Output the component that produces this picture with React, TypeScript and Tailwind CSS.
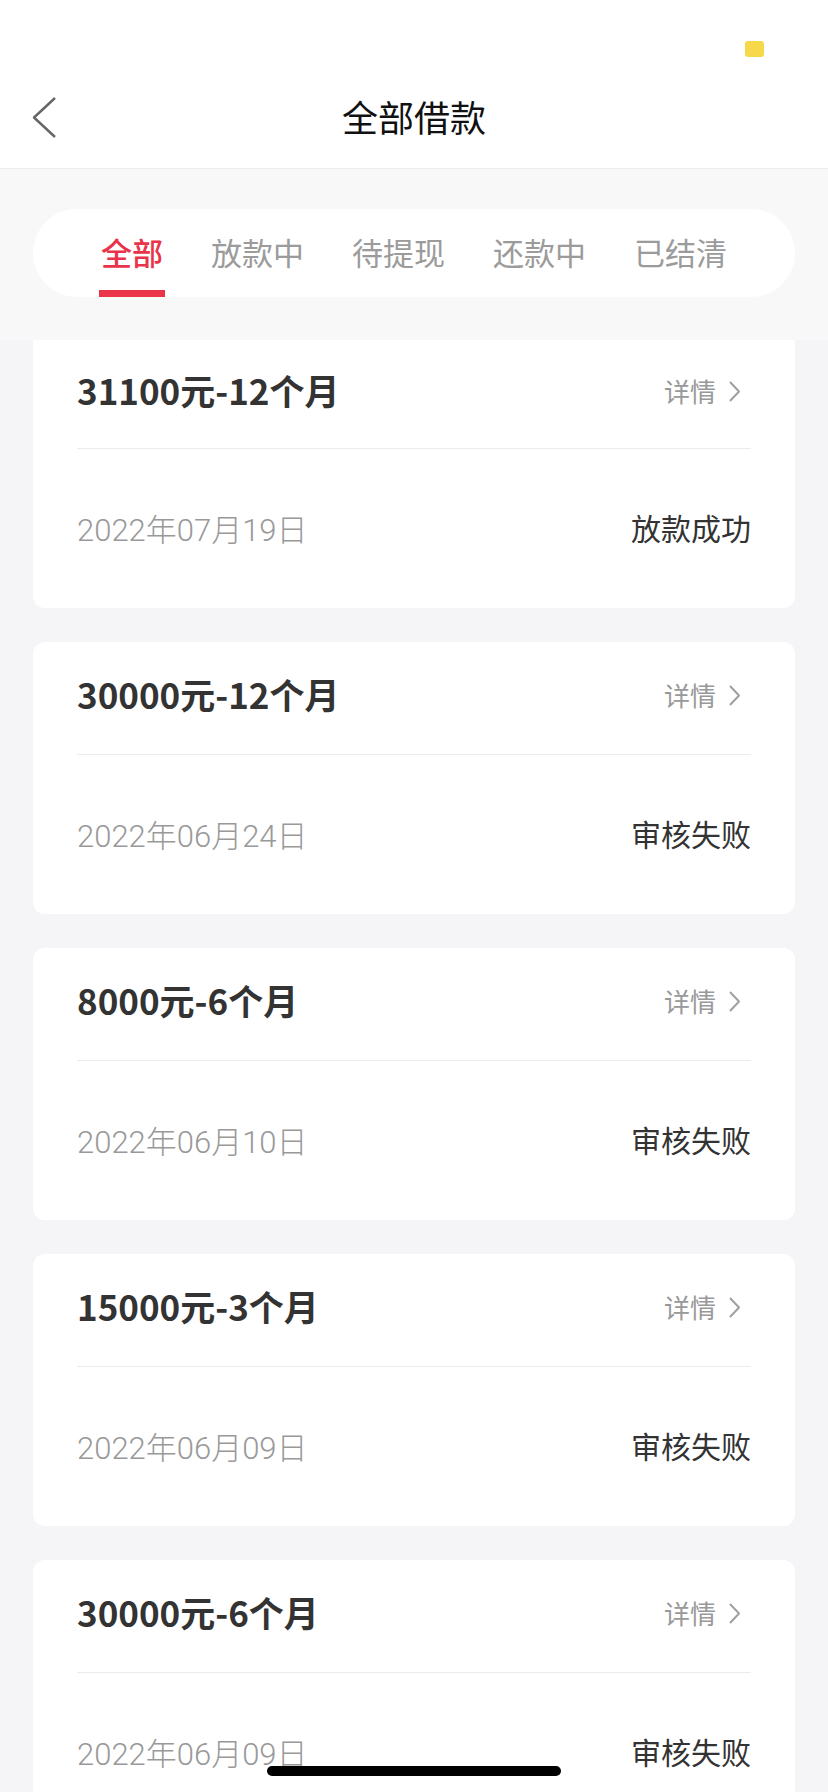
import React from "react";

type Loan = { title: string; date: string; status: string };

const loans: Loan[] = [
  { title: "31100元-12个月", date: "2022年07月19日", status: "放款成功" },
  { title: "30000元-12个月", date: "2022年06月24日", status: "审核失败" },
  { title: "8000元-6个月", date: "2022年06月10日", status: "审核失败" },
  { title: "15000元-3个月", date: "2022年06月09日", status: "审核失败" },
  { title: "30000元-6个月", date: "2022年06月09日", status: "审核失败" },
];

const tabs = ["全部", "放款中", "待提现", "还款中", "已结清"];

const font = { fontFamily: '"Noto Sans CJK SC", "Noto Sans", sans-serif' };
const dateFont = { fontFamily: 'Roboto, "Noto Sans CJK SC", sans-serif' };

const LoanCard = ({ loan, first }: { loan: Loan; first: boolean }) => (
  <div className={"bg-white px-[44px] " + (first ? "rounded-b-[12px]" : "rounded-[12px]")}>
    <div className={"flex items-center justify-between " + (first ? "h-[108px]" : "h-[112px]")}>
      <div className="-translate-y-[5px] text-[35px] font-semibold text-[#333] leading-none">{loan.title}</div>
      <div className="flex -translate-y-[3px] items-center gap-[12px] pr-[10px] text-[26px] text-[#999] leading-none">
        <span>详情</span>
        <svg width="13" height="21" viewBox="0 0 13 21" fill="none">
          <polyline points="2,1 11,10.5 2,20" stroke="#a0a0a0" strokeWidth="2" strokeLinejoin="round" />
        </svg>
      </div>
    </div>
    <div className="h-px bg-[#ebebeb]" />
    <div className="flex h-[159px] items-center justify-between">
      <div className="translate-y-[2px] text-[31px] font-light text-[#999] leading-none" style={dateFont}>
        {loan.date}
      </div>
      <div className="-translate-y-[2px] text-[30px] text-[#333] leading-none">{loan.status}</div>
    </div>
  </div>
);

export default function App() {
  return (
    <div className="relative h-[1792px] w-[828px] overflow-hidden bg-[#f5f5f7]" style={font}>
      {/* header */}
      <div className="h-[169px] border-b border-[#ececec] bg-white">
        <div className="flex h-[68px] justify-end pr-[64px] pt-[41px]">
          <div className="h-[16px] w-[19px] rounded-[3px] bg-[#f7d84b]" />
        </div>
        <div className="grid h-[100px] grid-cols-[1fr_auto_1fr] items-center px-[32px]">
          <svg width="26" height="42" viewBox="0 0 26 42" fill="none">
            <polyline points="23,1 2,20.5 23,40" stroke="#666" strokeWidth="2.4" strokeLinejoin="round" />
          </svg>
          <div className="-translate-y-[2px] text-[36px] text-[#111] leading-none">全部借款</div>
          <div />
        </div>
      </div>

      {/* tabs */}
      <div className="h-[171px] bg-[#f8f8f8] px-[33px] pt-[40px]">
        <div className="flex h-[88px] justify-center gap-[48px] rounded-full bg-white">
          {tabs.map((t, i) => (
            <div key={t} className="relative flex h-full items-center">
              <span
                className={
                  "-translate-y-[2px] text-[31px] leading-none " +
                  (i === 0 ? "font-medium text-[#e9334a]" : "text-[#9b9b9b]")
                }
              >
                {t}
              </span>
              {i === 0 && <div className="absolute bottom-0 -left-[2px] -right-[2px] h-[7px] bg-[#ea3449]" />}
            </div>
          ))}
        </div>
      </div>

      {/* list */}
      <div className="flex flex-col gap-[34px] px-[33px]">
        {loans.map((l, i) => (
          <LoanCard key={i} loan={l} first={i === 0} />
        ))}
      </div>

      {/* home indicator */}
      <div className="absolute bottom-[16px] left-[267px] h-[10px] w-[294px] rounded-full bg-black" />
    </div>
  );
}
